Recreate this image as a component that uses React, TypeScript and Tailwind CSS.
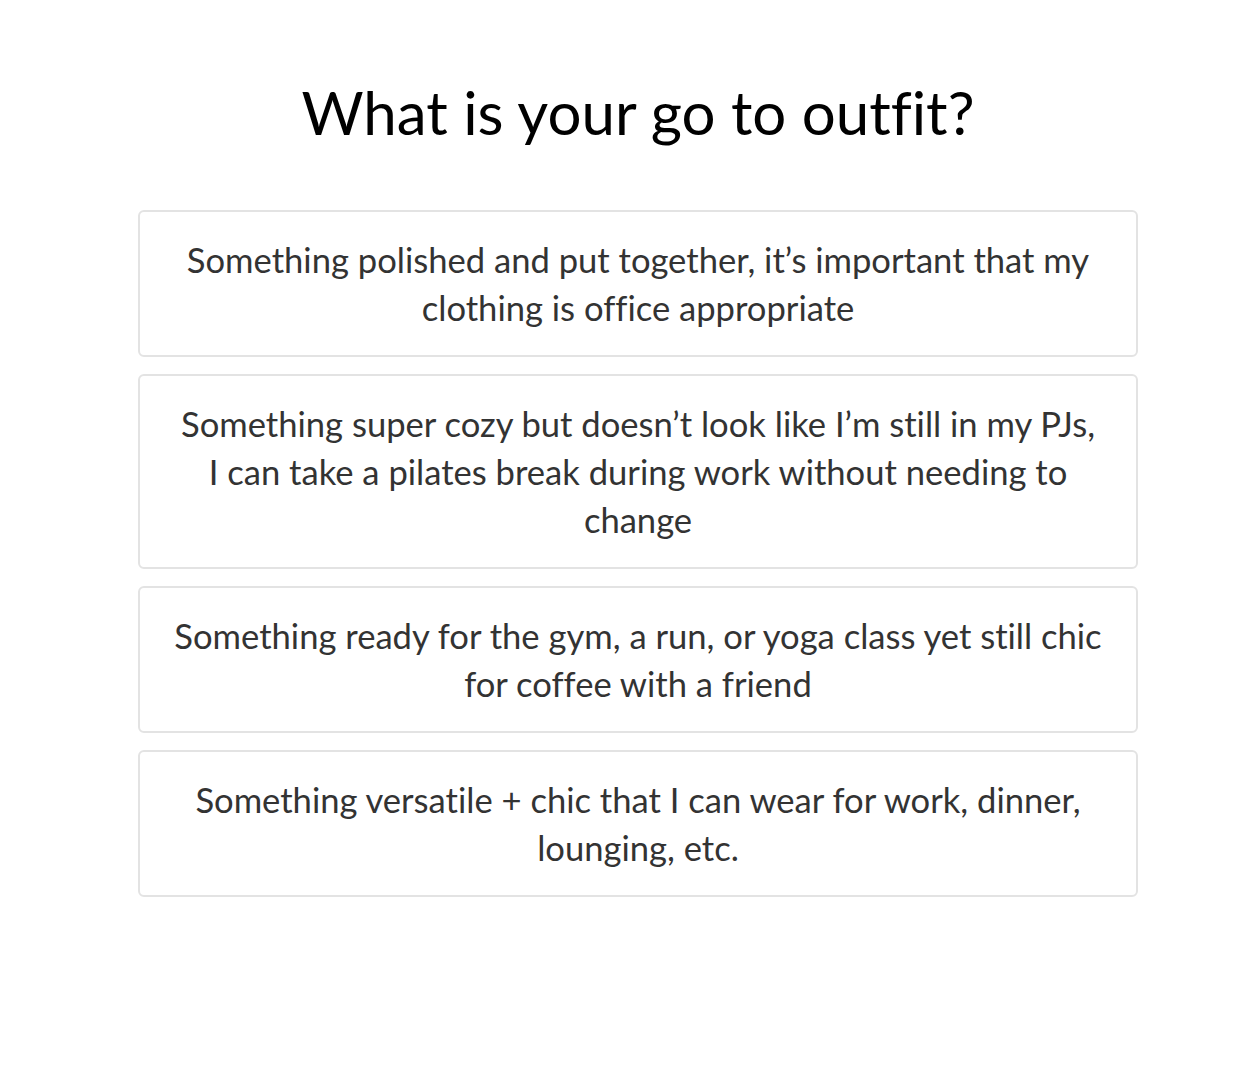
import React from "react";

const options: string[][] = [
  ["Something polished and put together, it’s important that my", "clothing is office appropriate"],
  ["Something super cozy but doesn’t look like I’m still in my PJs,", "I can take a pilates break during work without needing to", "change"],
  ["Something ready for the gym, a run, or yoga class yet still chic", "for coffee with a friend"],
  ["Something versatile + chic that I can wear for work, dinner,", "lounging, etc."],
];

export default function App() {
  return (
    <div
      className="min-h-[1068px] w-full bg-white [font-variant-ligatures:none]"
      style={{ fontFamily: "Lato, 'Noto Sans', sans-serif" }}
    >
      <div className="ml-[138px] flex w-[1000px] flex-col items-center pt-[76px]">
        <h1 className="text-[60px] leading-[72px] font-normal text-black">What is your go to outfit?</h1>
        <div className="mt-[62px] flex w-full flex-col gap-[17px]">
          {options.map((lines, i) => (
            <button
              key={i}
              className="w-full rounded-[6px] border-2 border-[#e3e3e3] bg-white px-6 py-[23.5px] text-center text-[34.6px] leading-[48px] text-[#333333]"
            >
              {lines.map((l, j) => (
                <span key={j} className="block whitespace-nowrap">{l}</span>
              ))}
            </button>
          ))}
        </div>
      </div>
    </div>
  );
}
